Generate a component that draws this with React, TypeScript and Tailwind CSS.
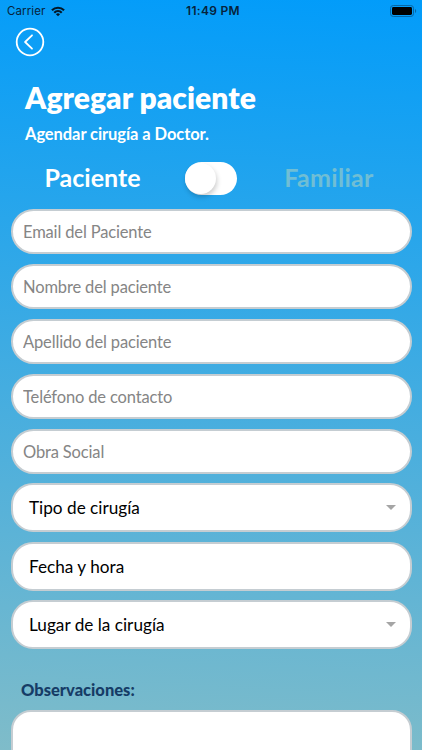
import { useState } from 'react';

const TEXT_FIELDS = [
  { name: 'email', placeholder: 'Email del Paciente' },
  { name: 'nombre', placeholder: 'Nombre del paciente' },
  { name: 'apellido', placeholder: 'Apellido del paciente' },
  { name: 'telefono', placeholder: 'Teléfono de contacto' },
  { name: 'obraSocial', placeholder: 'Obra Social' },
];

const PICKERS = [
  { label: 'Tipo de cirugía', arrow: true },
  { label: 'Fecha y hora', arrow: false },
  { label: 'Lugar de la cirugía', arrow: true },
];

function StatusBar() {
  return (
    <div className="h-[22px] pl-[7px] pr-[5px] grid grid-cols-3 items-center font-['Inter',sans-serif] text-[#06233b]">
      <div className="flex items-center gap-[6px]">
        <span className="pt-px text-[11.5px] leading-none tracking-[0.1px]">Carrier</span>
        <svg width="14" height="11" viewBox="0 0 15 11" fill="none" stroke="#031827" strokeWidth="2.3">
          <path d="M1 4.1a9.3 9.3 0 0 1 13 0" />
          <path d="M3.5 6.8a5.7 5.7 0 0 1 8 0" />
          <path d="M7.5 10.7 5.3 8.5a3.2 3.2 0 0 1 4.4 0z" fill="#031827" stroke="none" />
        </svg>
      </div>
      <span className="text-center pl-[2px] text-[12px] leading-none font-semibold tracking-[0.3px]">11:49 PM</span>
      <svg className="justify-self-end" width="27" height="12" viewBox="0 0 27 12">
        <rect x="0.5" y="0.5" width="23" height="11" rx="2.8" fill="none" stroke="#0767a5" />
        <rect x="2" y="2" width="20" height="8" rx="1.4" fill="#000" />
        <path d="M25 4v4c1.6-.7 1.6-3.3 0-4z" fill="#0767a5" />
      </svg>
    </div>
  );
}

function Switch({ on, onToggle }: { on: boolean; onToggle: () => void }) {
  return (
    <button
      type="button"
      role="switch"
      aria-checked={on}
      aria-label="Familiar"
      onClick={onToggle}
      className={`w-[52px] h-[33px] rounded-full bg-white flex items-center ${on ? 'justify-end' : 'justify-start'}`}
    >
      <span className="w-[31px] h-[31px] rounded-full bg-white shadow-[1px_3px_5px_rgba(0,0,0,0.2)]" />
    </button>
  );
}

export default function App() {
  const [familiar, setFamiliar] = useState(false);

  return (
    <div className="h-[750px] overflow-hidden bg-[linear-gradient(183deg,#029cfa_0%,#7fbcc9_100%)] font-['Lato',sans-serif]">
      <StatusBar />

      <button type="button" aria-label="Volver" className="block ml-[15px] mt-[5px]">
        <svg width="30" height="30" viewBox="0 0 30 30" fill="none" stroke="#fff" strokeWidth="1.8" strokeLinecap="round" strokeLinejoin="round">
          <circle cx="15" cy="15" r="13.3" />
          <path d="M17 8.3 10.1 15l6.9 6.7" />
        </svg>
      </button>

      <header className="pl-[25px] mt-[21px] text-white">
        <h1 className="text-[30px] leading-[38px] font-extrabold tracking-[0.05px]">Agregar paciente</h1>
        <p className="mt-2 text-[16.5px] leading-5 font-bold tracking-[-0.08px]">Agendar cirugía a Doctor.</p>
      </header>

      <div className="mt-[18px] flex items-center h-[33px] text-[25px] leading-[33px] font-bold">
        <span className="w-[185px] pb-0.5 text-center text-white">Paciente</span>
        <Switch on={familiar} onToggle={() => setFamiliar(!familiar)} />
        <span className="w-[184px] pb-0.5 text-center tracking-[0.3px] text-[#70bed4]">Familiar</span>
      </div>

      <form className="px-[10.5px] mt-[14px]">
        <div className="flex flex-col gap-[10px]">
          {TEXT_FIELDS.map((f) => (
            <input
              key={f.name}
              name={f.name}
              placeholder={f.placeholder}
              className="w-full h-[45px] rounded-[22.5px] border-2 border-[#c5cdd2] bg-white px-[10.5px] text-[16.5px] tracking-[-0.15px] text-black placeholder:text-[#858585] outline-none"
            />
          ))}
        </div>

        <div className="mt-[9px] flex flex-col gap-[9.5px]">
          {PICKERS.map((p) => (
            <button
              key={p.label}
              type="button"
              className="w-full h-[49px] rounded-[22px] border-2 border-[#c5cdd2] bg-white pt-px pl-[16.5px] pr-[13.5px] flex items-center justify-between text-[17.2px] text-black"
            >
              {p.label}
              {p.arrow && (
                <svg className="mb-px" width="10" height="5" viewBox="0 0 10 5" fill="#a5a5a5">
                  <path d="M0 0h10L5 5z" />
                </svg>
              )}
            </button>
          ))}
        </div>

        <label htmlFor="observaciones" className="block mt-[31px] ml-[10.5px] text-[16.5px] leading-5 font-black text-[#163c66]">
          Observaciones:
        </label>
        <textarea
          id="observaciones"
          className="block mt-[10px] w-full h-[120px] resize-none rounded-[20px] border-2 border-[#c5cdd2] bg-white p-3 text-[16.5px] outline-none"
        />
      </form>
    </div>
  );
}
